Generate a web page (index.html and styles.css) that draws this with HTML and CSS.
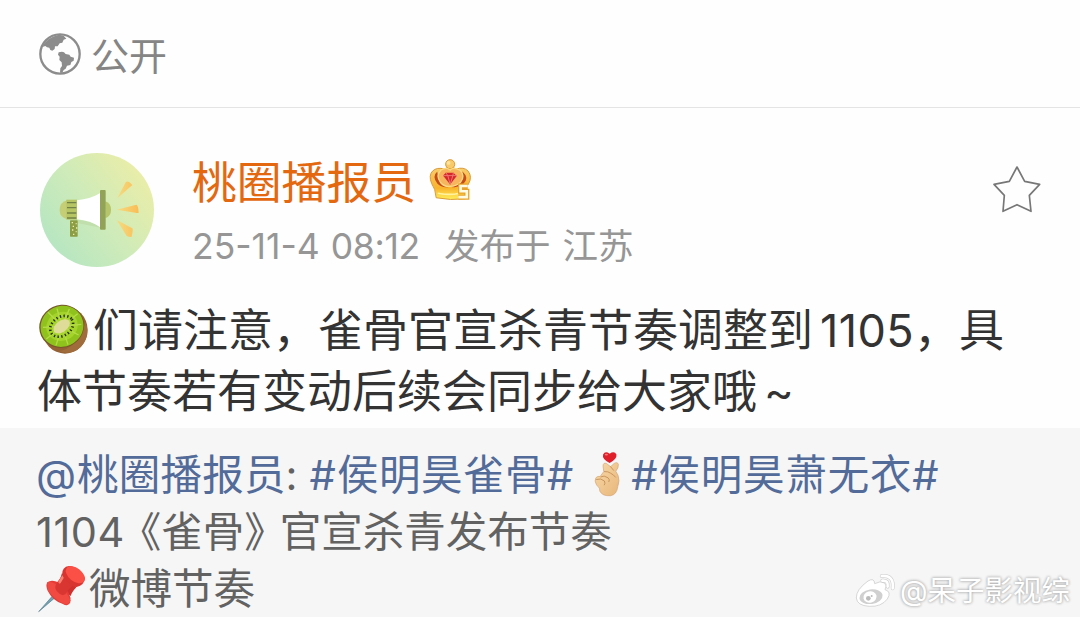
FILE: index.html
```html
<!doctype html>
<html lang="zh-CN">
  <head>
    <meta charset="UTF-8" />
    <meta name="viewport" content="width=device-width, initial-scale=1.0" />
    <title>微博正文</title>
    <link rel="stylesheet" href="styles.css">
  </head>
  <body>
    <div class="page">
      <div class="visibility">
        <svg class="globe" viewBox="0 0 126 126">
          <circle cx="63" cy="63" r="59" fill="none" stroke="#8c8c8c" stroke-width="7" />
          <path d="M10 42 Q24 12 60 5 L74 8 L82 17 L74 20 L70 29 L62 31 L56 40 L48 40 L47 48 L40 53 L34 51 L31 44 L24 43 L19 39 Z" fill="#8c8c8c" />
          <path d="M59 58 L69 56 L75 58 L80 63 L91 65 L95 71 L105 74 L104 83 L97 87 L94 96 L84 98 L80 107 L74 111 L70 119 L63 119 L64 106 L69 99 L68 88 L61 81 L62 71 L57 65 Z" fill="#8c8c8c" />
        </svg>
        <span class="visibility-text">公开</span>
      </div>

      <div class="author">
        <svg class="avatar" viewBox="0 0 342 342">
          <defs>
            <linearGradient id="avatarBg" x1="0.1" y1="0.8" x2="0.9" y2="0.2">
              <stop offset="0" stop-color="#b7e6c1" />
              <stop offset="0.5" stop-color="#cfebb9" />
              <stop offset="1" stop-color="#e9eda9" />
            </linearGradient>
            <linearGradient id="ray" x1="0" x2="1">
              <stop offset="0" stop-color="#f5dc80" />
              <stop offset="1" stop-color="#fabc55" />
            </linearGradient>
          </defs>
          <circle cx="171" cy="171" r="171" fill="url(#avatarBg)" />
          <!-- megaphone -->
          <path d="M82 142 Q59 147 59 172 Q59 194 82 199 Z" fill="#c6ce75" />
          <path d="M196 145 Q213 150 213 171 Q213 190 196 196 Z" fill="#b6c56a" />
          <path d="M111 200 Q157 203 182 224 L111 210 Z" fill="#c0dfac" />
          <path d="M111 142 Q151 138 181 120 V223 Q151 202 111 199 Z" fill="#fff" />
          <rect x="79" y="140" width="32" height="60" fill="#b8c564" />
          <path d="M81 149 H109 M81 164 H109 M81 180 H109 M81 195 H109" stroke="#718244" stroke-width="4" />
          <rect x="90" y="202" width="23" height="49" rx="2" fill="#8d9d43" />
          <path d="M95 209 h4 m8 3 h3 m-12 8 h4 m6 5 h4 m-16 6 h4 m7 5 h3 m-11 8 h4" stroke="#e9edb0" stroke-width="4" />
          <rect x="180" y="111" width="17" height="119" rx="3" fill="#92a358" />
          <path d="M232 136 L257 88 Q263 81 277 96 Z M230 170 L289 155 Q295 156 296 179 Q294 181 286 179 Z M230 201 L277 226 Q280 229 275 251 Q270 253 260 249 Z" fill="url(#ray)" />
        </svg>
        <div class="author-info">
          <div class="author-name">
            <span>桃圈播报员</span>
            <svg class="crown" viewBox="0 0 132 132">
              <defs>
                <linearGradient id="gold" x1="0" y1="0" x2="0" y2="1">
                  <stop offset="0" stop-color="#f8cf70" />
                  <stop offset="0.65" stop-color="#f9b42c" />
                  <stop offset="1" stop-color="#fff05b" />
                </linearGradient>
              </defs>
              <path d="M22 119 Q20 91 8 75 Q-2 50 11 37 Q24 24 48 31 Q65 17 83 31 Q107 23 120 37 Q134 55 121 77 L112 91 V122 Q65 128 22 119 Z" fill="url(#gold)" stroke="#d99935" stroke-width="3" />
              <circle cx="65" cy="16" r="14" fill="#f8ca68" stroke="#d99935" stroke-width="3" />
              <circle cx="60" cy="12" r="6" fill="#fce49b" />
              <path d="M25 39 Q8 53 26 76 Q42 91 63 85 Q33 78 25 39 Z" fill="#c74b18" />
              <path d="M103 38 Q125 58 105 77 Q87 91 67 85 Q94 74 103 38 Z" fill="#c74b18" />
              <path d="M37 34 Q19 51 36 73 Q47 86 64 84 Q84 84 97 71 Q112 52 96 35 Q75 23 65 34 Q52 24 37 34 Z" fill="#f7b65d" stroke="#f9db84" stroke-width="4" />
              <path d="M43 51 L52 42 L75 42 L85 52 L65 78 Z" fill="#d6252b" />
              <path d="M43 51 H85 M52 42 L58 52 L65 78 L73 52 L75 42" fill="none" stroke="#ee7772" stroke-width="3" />
              <path d="M27 105 Q65 112 90 106" fill="none" stroke="#fff2a0" stroke-width="5" />
              <path d="M119 83 H97 V99 H116 V117 H90" fill="none" stroke="#e7a32b" stroke-width="16" />
              <path d="M119 83 H97 V99 H116 V117 H90" fill="none" stroke="#fffbe3" stroke-width="8" />
            </svg>
          </div>
          <div class="author-meta">
            <span class="date">25-11-4</span>
            <span class="time">08:12</span>
            <span class="published">发布于</span>
            <span class="region">江苏</span>
          </div>
        </div>
        <svg class="star" viewBox="0 0 150 150">
          <path d="M75 9 L98 52 L143 61 L112 94 L117 142 L75 122 L33 142 L37 94 L6 61 L52 52 Z" fill="none" stroke="#777" stroke-width="5" stroke-linejoin="round" />
        </svg>
      </div>

      <div class="post">
        <div class="post-line">
          <svg class="kiwi" viewBox="0 0 150 150">
            <ellipse cx="78" cy="78" rx="68" ry="71" fill="#946034" />
            <path d="M140 54 Q155 98 124 130 Q96 156 58 141 Q113 137 140 54 Z" fill="#a06c3b" />
            <ellipse cx="68" cy="67" rx="68" ry="64" fill="#76572a" transform="rotate(-25 68 67)" />
            <ellipse cx="69" cy="67" rx="65" ry="61" fill="#8fc21c" transform="rotate(-25 69 67)" />
            <ellipse cx="69" cy="67" rx="48" ry="43" fill="#a4d42c" transform="rotate(-25 69 67)" />
            <path d="M69 67 L27 25 M69 67 L54 14 M69 67 L91 15 M69 67 L116 29 M69 67 L127 61 M69 67 L119 93 M69 67 L87 122 M69 67 L51 124 M69 67 L22 105 M69 67 L12 70" stroke="#b5dc48" stroke-width="4" />
            <ellipse cx="68" cy="67" rx="28" ry="17" fill="#dedc98" transform="rotate(-35 68 67)" />
            <ellipse cx="68" cy="67" rx="37" ry="28" fill="none" stroke="#272f11" stroke-width="8" stroke-dasharray="4 7" transform="rotate(-35 68 67)" />
          </svg>
          <span class="lead">们请注意，雀骨官宣杀青节奏调整到</span>
          <span class="number">1105</span>
          <span class="tail">，</span>
          <span>具</span>
        </div>
        <div class="post-line">
          <span>体节奏若有变动后续会同步给大家哦</span>
          <span class="tilde">~</span>
        </div>
      </div>

      <div class="quote">
        <div class="quote-line">
          <span class="link at">@</span>
          <span class="link user">桃圈播报员</span>
          <span class="colon">:</span>
          <span class="link topic-one"><i>#</i>侯明昊雀骨<i>#</i></span>
          <svg class="finger-heart" viewBox="0 0 78 138">
            <defs>
              <linearGradient id="skin" x1="0" y1="0" x2="1" y2="1">
                <stop offset="0" stop-color="#f8d9a8" />
                <stop offset="1" stop-color="#e8b67a" />
              </linearGradient>
            </defs>
            <path d="M27 43 Q27 32 37 35 L50 45 L61 35 Q71 29 74 38 Q75 48 66 59 L73 72 Q79 88 72 106 Q69 131 50 134 Q25 136 17 120 Q19 111 7 101 Q-1 88 5 79 Q11 73 18 75 L29 60 Z" fill="url(#skin)" stroke="#d2a36f" stroke-width="2" />
            <path d="M31 60 Q43 59 50 65 Q60 70 65 77 M20 76 Q30 70 42 79 Q49 85 45 91 M7 84 Q21 79 31 89 Q35 96 31 101 M50 45 L59 56" fill="none" stroke="#c08a52" stroke-width="2.5" stroke-linecap="round" />
            <path d="M47 34 Q23 22 27 8 Q33 -5 47 5 Q62 -5 68 8 Q70 22 47 34 Z" fill="#df202b" />
            <ellipse cx="37" cy="8" rx="5" ry="3" fill="#f77a79" />
          </svg>
          <span class="link topic-two"><i>#</i>侯明昊萧无衣<i>#</i></span>
        </div>
        <div class="quote-line">
          <span class="quote-number">1104</span>
          <span class="book">《雀骨》</span>
          <span class="schedule">官宣杀青发布节奏</span>
        </div>
        <div class="quote-line">
          <svg class="pin" viewBox="0 0 144 144">
            <path d="M2 140 L45 91 L51 98 Z" fill="#72a4b5" stroke="#587e8d" stroke-width="2" />
            <path d="M72 24 L115 67 Q101 82 98 93 L48 58 Q66 50 72 24 Z" fill="#cf302d" />
            <path d="M28 52 Q43 40 68 57 Q103 85 97 112 Q92 127 73 116 Q43 106 29 77 Q22 61 28 52 Z" fill="#e53c37" />
            <path d="M28 52 Q42 48 64 64 Q88 82 97 106 Q92 123 77 116 Q47 102 29 75 Z" fill="#f04a43" />
            <path d="M53 60 L74 30 L105 62 Q88 74 82 88 Q70 95 60 82 Q49 73 53 60 Z" fill="#d93632" />
            <path d="M65 51 L75 35" stroke="#fb8070" stroke-width="8" stroke-linecap="round" />
            <path d="M77 11 Q87 -3 109 7 Q135 19 141 40 Q139 61 116 66 Q99 67 78 40 Q68 24 77 11 Z" fill="#d83430" />
            <ellipse cx="112" cy="29" rx="33" ry="20" fill="#fa5045" transform="rotate(38 112 29)" />
          </svg>
          <span class="rhythm">微博节奏</span>
        </div>
      </div>

      <div class="watermark">
        <svg class="weibo" viewBox="0 0 120 102">
          <path d="M39 21 Q58 10 59 29 Q76 19 89 27 Q97 35 90 47 Q111 53 97 75 Q79 99 43 97 Q6 95 4 72 Q3 47 39 21 Z" fill="#fff" stroke="#c4c4c4" stroke-width="2" />
          <ellipse cx="48" cy="68" rx="35" ry="22" fill="#d0d0d0" transform="rotate(-8 48 68)" />
          <ellipse cx="45" cy="69" rx="20" ry="17" fill="#fff" transform="rotate(-15 45 69)" />
          <circle cx="40" cy="73" r="7" fill="#bbb" />
          <circle cx="50" cy="66" r="3" fill="#bbb" />
          <path d="M80 6 Q118 3 113 43 M82 20 Q101 18 98 38" fill="none" stroke="#c9c9c9" stroke-width="11" stroke-linecap="round" />
          <path d="M80 6 Q118 3 113 43 M82 20 Q101 18 98 38" fill="none" stroke="#fff" stroke-width="8" stroke-linecap="round" />
        </svg>
        <span>@呆子影视综</span>
      </div>
    </div>
  </body>
</html>
```
FILE: styles.css
```css
* {
  margin: 0;
  padding: 0;
  box-sizing: border-box;
}

body {
  font-family: Inter, 'Noto Sans CJK SC', sans-serif;
  background: #fefefe;
  color: #333;
  overflow: hidden;
}

svg {
  display: block;
  flex: none;
  overflow: visible;
}

i {
  font-style: normal;
  letter-spacing: 1px;
}

.page {
  position: relative;
  width: 1080px;
  height: 617px;
  overflow: hidden;
}

.visibility {
  display: flex;
  align-items: center;
  height: 108px;
  padding-left: 39px;
  border-bottom: 1px solid #e4e4e4;
}

.globe {
  width: 42px;
  height: 42px;
}

.visibility-text {
  margin-left: 10px;
  padding-top: 4px;
  font-size: 38px;
  line-height: 50px;
  color: #858585;
}

.author {
  display: flex;
  height: 192px;
  padding: 45px 38px 0 40px;
}

.avatar {
  width: 114px;
  height: 114px;
}

.author-info {
  flex: 1;
  padding-left: 38px;
}

.author-name {
  display: flex;
  height: 60px;
  font-size: 44.8px;
  line-height: 61px;
  color: #e3680f;
}

.crown {
  width: 43px;
  height: 43px;
  margin: 6px 0 0 13px;
}

.author-meta {
  display: flex;
  height: 60px;
  font-size: 35.5px;
  line-height: 68px;
  color: #969696;
  white-space: nowrap;
}

.time {
  margin-left: 11px;
  letter-spacing: -0.3px;
}

.published {
  margin-left: 24px;
}

.region {
  margin-left: 12px;
}

.star {
  width: 50px;
  height: 50px;
  margin-top: 11px;
}

.post {
  height: 128px;
  padding-left: 37px;
  font-size: 45px;
}

.post-line,
.quote-line {
  display: flex;
  white-space: nowrap;
}

.post-line {
  height: 60px;
  line-height: 62px;
}

.post-line + .post-line {
  line-height: 64px;
}

.kiwi {
  width: 50px;
  height: 50px;
  margin: 4px 4px 0 2px;
}

.number {
  margin-left: 7px;
  letter-spacing: 0.4px;
}

.tilde {
  margin-left: 7px;
}

.quote {
  height: 189px;
  padding: 19px 0 0 36px;
  background: #f6f6f6;
  font-size: 41.5px;
  color: #626262;
}

.quote-line {
  height: 57px;
  line-height: 57px;
}

.link {
  color: #526b99;
}

.user {
  margin-left: 1px;
  letter-spacing: 0.2px;
}

.topic-one {
  margin-left: 12px;
}

.topic-one {
  letter-spacing: 0.5px;
}

.topic-two {
  letter-spacing: 0.8px;
}

.finger-heart {
  width: 26px;
  height: 45px;
  margin: 5px 11px 0 20px;
}

.quote-number {
  letter-spacing: 0.5px;
}

.book {
  margin-left: -5px;
}

.schedule {
  margin-left: -6px;
}

.pin {
  width: 48px;
  height: 48px;
  margin: 4px 3px 0 2px;
}

.watermark {
  position: absolute;
  right: 10px;
  bottom: 6px;
  display: flex;
  align-items: center;
  font-size: 28.5px;
  line-height: 40px;
  color: #fff;
  text-shadow: 0 0 3px #aaa, 0 0 3px #bbb;
}

.weibo {
  width: 40px;
  height: 34px;
  margin-right: 5px;
}
```
